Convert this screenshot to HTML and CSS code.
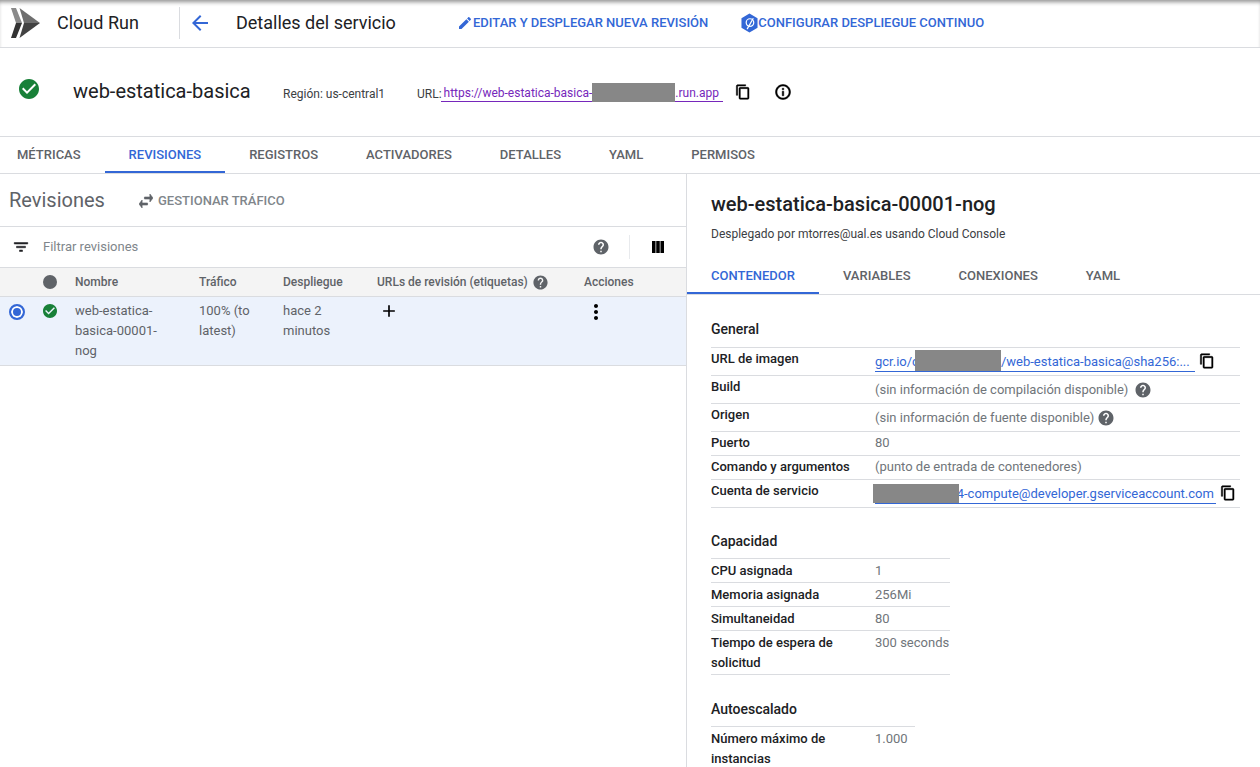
FILE: index.html
```html
<!DOCTYPE html>
<html lang="es">
<head>
    <meta charset="UTF-8">
    <title>Cloud Run - Detalles del servicio</title>
    <link rel="stylesheet" href="styles.css">
</head>
<body>
    <svg class="sprite" xmlns="http://www.w3.org/2000/svg">
        <symbol id="i-check" viewBox="2 2 20 20"><path d="M12 2C6.48 2 2 6.48 2 12s4.48 10 10 10 10-4.48 10-10S17.52 2 12 2zm-2 15l-5-5 1.41-1.41L10 14.17l7.59-7.59L19 8l-9 9z"/></symbol>
        <symbol id="i-back" viewBox="0 0 24 24"><path d="M20 11H7.83l5.59-5.59L12 4l-8 8 8 8 1.41-1.41L7.83 13H20v-2z"/></symbol>
        <symbol id="i-edit" viewBox="0 0 24 24"><path d="M3 17.25V21h3.75L17.81 9.94l-3.75-3.75L3 17.25zM20.71 7.04c.39-.39.39-1.02 0-1.41l-2.34-2.34c-.39-.39-1.02-.39-1.41 0l-1.83 1.83 3.75 3.75 1.83-1.83z"/></symbol>
        <symbol id="i-copy" viewBox="0 0 24 24"><path d="M16 1H4c-1.1 0-2 .9-2 2v14h2V3h12V1zm3 4H8c-1.1 0-2 .9-2 2v14c0 1.1.9 2 2 2h11c1.1 0 2-.9 2-2V7c0-1.1-.9-2-2-2zm0 16H8V7h11v14z"/></symbol>
        <symbol id="i-info" viewBox="0 0 24 24"><path d="M11 7h2v2h-2zm0 4h2v6h-2zm1-9C6.48 2 2 6.48 2 12s4.48 10 10 10 10-4.48 10-10S17.52 2 12 2zm0 18c-4.41 0-8-3.59-8-8s3.59-8 8-8 8 3.59 8 8-3.59 8-8 8z"/></symbol>
        <symbol id="i-help" viewBox="0 0 24 24"><path d="M12 2C6.48 2 2 6.48 2 12s4.48 10 10 10 10-4.48 10-10S17.52 2 12 2zm1 17h-2v-2h2v2zm2.07-7.75l-.9.92C13.45 12.9 13 13.5 13 15h-2v-.5c0-1.1.45-2.1 1.17-2.83l1.24-1.26c.37-.36.59-.86.59-1.41 0-1.1-.9-2-2-2s-2 .9-2 2H8c0-2.21 1.79-4 4-4s4 1.79 4 4c0 .88-.36 1.68-.93 2.25z"/></symbol>
        <symbol id="i-filter" viewBox="0 0 24 24"><path d="M10 18h4v-2h-4v2zM3 6v2h18V6H3zm3 7h12v-2H6v2z"/></symbol>
        <symbol id="i-columns" viewBox="4 5 17 13" preserveAspectRatio="none"><path d="M10 18h5V5h-5v13zm-6 0h5V5H4v13zM16 5v13h5V5h-5z"/></symbol>
        <symbol id="i-swap" viewBox="3 5 18 14" preserveAspectRatio="none"><path d="M6.99 11L3 15l3.99 4v-3H14v-2H6.99v-3zM21 9l-3.99-4v3H10v2h7.01v3L21 9z"/></symbol>
        <symbol id="i-add" viewBox="0 0 24 24"><path d="M19 13h-6v6h-2v-6H5v-2h6V5h2v6h6v2z"/></symbol>
        <symbol id="i-more" viewBox="0 0 24 24"><path d="M12 8c1.1 0 2-.9 2-2s-.9-2-2-2-2 .9-2 2 .9 2 2 2zm0 2c-1.1 0-2 .9-2 2s.9 2 2 2 2-.9 2-2-.9-2-2-2zm0 6c-1.1 0-2 .9-2 2s.9 2 2 2 2-.9 2-2-.9-2-2-2z"/></symbol>
    </svg>

    <header class="topbar">
        <svg class="logo" viewBox="0 0 30 30">
            <path class="logo-a" d="M0 0h5l6 15H5z"/>
            <path class="logo-b" d="M5 15h6L5 30H0z"/>
            <path class="logo-c" d="M8.500 0L29 15H13z"/>
            <path class="logo-d" d="M13 15h16L8.500 30z"/>
        </svg>
        <span class="product">Cloud Run</span>
        <span class="topbar-sep"></span>
        <svg class="icon back-icon"><use href="#i-back"/></svg>
        <h1 class="page-title">Detalles del servicio</h1>
        <a class="action action-edit"><svg class="icon"><use href="#i-edit"/></svg>Editar y desplegar nueva revisión</a>
        <a class="action action-deploy">
            <svg class="icon" viewBox="0 0 18 20">
                <path d="M9 0l8.500 5v10L9 20 .5 15V5z"/>
                <circle class="hex-mark" cx="9.500" cy="9.500" r="4"/>
                <path class="hex-mark" d="M6.500 16.500L13 5"/>
            </svg>Configurar despliegue continuo
        </a>
    </header>

    <section class="service">
        <svg class="icon status-big"><use href="#i-check"/></svg>
        <h2 class="service-name">web-estatica-basica</h2>
        <span class="meta region">Región: us-central1</span>
        <span class="meta">URL:</span>
        <a class="url-link">https://web-estatica-basica-<span class="redact redact-url"></span>.run.app</a>
        <svg class="icon bold copy-icon"><use href="#i-copy"/></svg>
        <svg class="icon bold info-icon"><use href="#i-info"/></svg>
    </section>

    <nav class="tabs tabs-main">
        <a class="tab">Métricas</a>
        <a class="tab active">Revisiones</a>
        <a class="tab">Registros</a>
        <a class="tab">Activadores</a>
        <a class="tab">Detalles</a>
        <a class="tab">YAML</a>
        <a class="tab">Permisos</a>
    </nav>

    <main class="split">
        <section class="left">
            <div class="left-head">
                <h2 class="left-title">Revisiones</h2>
                <a class="traffic"><svg class="icon bold"><use href="#i-swap"/></svg>Gestionar tráfico</a>
            </div>
            <div class="filter-row">
                <svg class="icon bold filter-icon"><use href="#i-filter"/></svg>
                <span class="filter-text">Filtrar revisiones</span>
                <svg class="icon help-icon filter-help"><use href="#i-help"/></svg>
                <span class="filter-sep"></span>
                <svg class="icon columns-icon"><use href="#i-columns"/></svg>
            </div>
            <div class="grid-row grid-head">
                <span></span>
                <span class="dot"></span>
                <span>Nombre</span>
                <span>Tráfico</span>
                <span>Despliegue</span>
                <span class="with-help">URLs de revisión (etiquetas)<svg class="icon help-icon"><use href="#i-help"/></svg></span>
                <span>Acciones</span>
            </div>
            <div class="grid-row grid-body">
                <span class="radio"></span>
                <svg class="icon status-small"><use href="#i-check"/></svg>
                <span>web-estatica-basica-00001-nog</span>
                <span>100% (to latest)</span>
                <span>hace 2 minutos</span>
                <svg class="icon add-icon"><use href="#i-add"/></svg>
                <svg class="icon more-icon"><use href="#i-more"/></svg>
            </div>
        </section>

        <section class="right">
            <h2 class="rev-title">web-estatica-basica-00001-nog</h2>
            <p class="rev-sub">Desplegado por mtorres@ual.es usando Cloud Console</p>
            <nav class="tabs tabs-rev">
                <a class="tab active">Contenedor</a>
                <a class="tab">Variables</a>
                <a class="tab">Conexiones</a>
                <a class="tab">YAML</a>
            </nav>

            <h3 class="group-title group-first">General</h3>
            <div class="kv kv-wide">
                <div class="kv-row tall">
                    <span class="kv-label">URL de imagen</span>
                    <span class="kv-value with-link"><a class="img-link link-img">gcr.io/c<span class="redact redact-img"></span>/web-estatica-basica@sha256:...</a><svg class="icon bold copy-small"><use href="#i-copy"/></svg></span>
                </div>
                <div class="kv-row tall">
                    <span class="kv-label">Build</span>
                    <span class="kv-value">(sin información de compilación disponible)<svg class="icon help-icon build-help"><use href="#i-help"/></svg></span>
                </div>
                <div class="kv-row tall">
                    <span class="kv-label">Origen</span>
                    <span class="kv-value">(sin información de fuente disponible)<svg class="icon help-icon origin-help"><use href="#i-help"/></svg></span>
                </div>
                <div class="kv-row">
                    <span class="kv-label">Puerto</span>
                    <span class="kv-value">80</span>
                </div>
                <div class="kv-row">
                    <span class="kv-label">Comando y argumentos</span>
                    <span class="kv-value">(punto de entrada de contenedores)</span>
                </div>
                <div class="kv-row tall">
                    <span class="kv-label">Cuenta de servicio</span>
                    <span class="kv-value with-link"><a class="img-link"><span class="redact redact-acct"></span>4-compute@developer.gserviceaccount.com</a><svg class="icon bold copy-small"><use href="#i-copy"/></svg></span>
                </div>
            </div>

            <h3 class="group-title">Capacidad</h3>
            <div class="kv kv-cap">
                <div class="kv-row"><span class="kv-label">CPU asignada</span><span class="kv-value">1</span></div>
                <div class="kv-row"><span class="kv-label">Memoria asignada</span><span class="kv-value">256Mi</span></div>
                <div class="kv-row"><span class="kv-label">Simultaneidad</span><span class="kv-value">80</span></div>
                <div class="kv-row"><span class="kv-label">Tiempo de espera de solicitud</span><span class="kv-value">300 seconds</span></div>
            </div>

            <h3 class="group-title group-auto">Autoescalado</h3>
            <div class="kv kv-auto">
                <div class="kv-row"><span class="kv-label">Número máximo de instancias</span><span class="kv-value">1.000</span></div>
            </div>
        </section>
    </main>
</body>
</html>
```

FILE: styles.css
```css
html, body {
    margin: 0;
    padding: 0;
    height: 100%;
    overflow: hidden;
}
body {
    font-family: Roboto, Arial, sans-serif;
    font-size: 13px;
    color: #202124;
    background: #fff;
    display: flex;
    flex-direction: column;
}
h1, h2, h3, p {
    margin: 0;
    font-weight: 400;
}
.sprite {
    display: none;
}
.icon {
    width: 24px;
    height: 24px;
    fill: currentColor;
    flex: none;
}
/* the reference icons are a bit heavier than the plain material paths */
.bold {
    stroke: currentColor;
    stroke-width: 0.7;
}

/* top bar */
.topbar {
    height: 45px;
    flex: none;
    display: flex;
    align-items: center;
    border-bottom: 1px solid #dadce0;
    padding: 0 0 2px 11px;
    box-shadow: inset 0 4px 4px -2px #909090;
}
.logo {
    width: 30px;
    height: 30px;
}
.logo-a {
    fill: #8a8a8a;
}
.logo-b {
    fill: #333;
}
.logo-c {
    fill: #6e6e6e;
}
.logo-d {
    fill: #424242;
}
.product {
    font-size: 18px;
    margin-left: 16px;
    width: 122px;
}
.topbar-sep {
    width: 1px;
    height: 32px;
    background: #dadce0;
}
.back-icon {
    color: #3367d6;
    margin-left: 8px;
}
.page-title {
    font-size: 18px;
    margin-left: 24px;
    width: 221px;
}
.action {
    display: flex;
    align-items: center;
    font-weight: 500;
    font-size: 13px;
    color: #3367d6;
    text-transform: uppercase;
}
.action .icon {
    width: 16px;
    height: 16px;
}
.action-deploy {
    margin-left: 33px;
}
.action-deploy .icon {
    width: 17px;
    height: 20px;
}
.hex-mark {
    fill: none;
    stroke: #fff;
    stroke-width: 1.300;
}

/* service header */
.service {
    height: 86px;
    flex: none;
    display: flex;
    align-items: center;
    border-bottom: 1px solid #dadce0;
    padding: 0 0 2px 19px;
}
.status-big {
    width: 20px;
    height: 20px;
    color: #188038;
    margin-top: -4px;
}
.service-name {
    font-size: 20px;
    margin-left: 34px;
    width: 210px;
}
.meta {
    font-size: 12px;
    color: #3c4043;
    margin-top: 5px;
}
.region {
    width: 134px;
}
.url-link {
    font-size: 12px;
    color: #7627bb;
    border-bottom: 1px solid #7627bb;
    padding: 0 4px 0 3px;
    margin: 5px 0 0 -1px;
    height: 16px;
    line-height: 17px;
}
.redact {
    display: inline-block;
    background: #878787;
    vertical-align: middle;
    position: relative;
}
.redact-url {
    width: 83px;
    height: 19px;
    margin: -3px 0 0;
}
.copy-icon {
    width: 16px;
    height: 16px;
    color: #000;
    margin: 2px 0 0 12px;
}
.info-icon {
    width: 18px;
    height: 18px;
    color: #000;
    margin: 2px 0 0 23px;
}

/* tabs */
.tabs {
    display: flex;
    border-bottom: 1px solid #dadce0;
    flex: none;
}
.tab {
    padding: 0 24px;
    font-weight: 500;
    font-size: 13px;
    text-transform: uppercase;
    color: #5f6368;
    line-height: 36px;
    height: 36px;
    box-sizing: border-box;
    border-bottom: 2px solid transparent;
}
.tab.active {
    color: #3367d6;
    border-bottom-color: #3367d6;
}
.tabs-main .tab:first-child {
    padding-left: 17px;
}

/* left and right parts */
.split {
    flex: 1;
    display: flex;
    min-height: 0;
}
.left {
    width: 686px;
    flex: none;
    border-right: 1px solid #dadce0;
}
.left-head {
    height: 52px;
    display: flex;
    align-items: center;
    padding-left: 9px;
    border-bottom: 1px solid #dadce0;
}
.left-title {
    font-size: 20px;
    color: #5f6368;
    width: 130px;
}
.traffic {
    display: flex;
    align-items: center;
    font-weight: 500;
    font-size: 13px;
    color: #80868b;
    text-transform: uppercase;
    padding-top: 1px;
}
.traffic .icon {
    width: 14px;
    height: 14px;
    margin-right: 5px;
    color: #5f6368;
}
.filter-row {
    height: 40px;
    display: flex;
    align-items: center;
    padding-left: 12px;
    border-bottom: 1px solid #dadce0;
}
.filter-icon {
    width: 18px;
    height: 18px;
    color: #202124;
}
.filter-text {
    color: #80868b;
    margin: -1px 0 0 13px;
    flex: 1;
}
.help-icon {
    width: 17px;
    height: 17px;
    color: #5f6368;
}
.filter-help {
    width: 18px;
    height: 18px;
}
.filter-sep {
    width: 1px;
    height: 24px;
    background: #e8eaed;
    margin: 0 22px 0 19px;
}
.columns-icon {
    width: 12px;
    height: 12px;
    color: #000;
    margin-right: 22px;
}
.grid-row {
    display: grid;
    grid-template-columns: 34px 41px 124px 84px 94px 207px 1fr;
}
.grid-head {
    height: 28px;
    align-items: center;
    background: #f4f4f4;
    border-bottom: 1px solid #dadce0;
    font-size: 12px;
    font-weight: 500;
    color: #5f6368;
}
.dot {
    width: 14px;
    height: 14px;
    border-radius: 50%;
    background: #5f6368;
    margin-left: 9px;
}
.with-help {
    display: flex;
    align-items: center;
    gap: 4px;
}
.grid-body {
    height: 69px;
    background: #ecf2fc;
    border-bottom: 1px solid #dadce0;
    box-sizing: border-box;
    padding-top: 4px;
    line-height: 20px;
    color: #5f6368;
}
.grid-body > span:nth-child(n+3) {
    padding-right: 24px;
}
.radio {
    width: 12px;
    height: 12px;
    border: 2px solid #3367d6;
    box-shadow: inset 0 0 0 2px #fff;
    background: #3367d6;
    border-radius: 50%;
    margin: 3px 0 0 9px;
}
.status-small {
    width: 14px;
    height: 14px;
    color: #188038;
    margin: 3px 0 0 9px;
}
.add-icon {
    width: 20px;
    height: 20px;
    color: #000;
    margin: 0 0 0 2px;
}
.more-icon {
    width: 24px;
    height: 24px;
    color: #000;
    margin: -1px 0 0;
}

/* right part */
.right {
    flex: 1;
    padding-right: 20px;
    min-width: 0;
}
.rev-title {
    font-size: 20px;
    font-weight: 500;
    margin: 18px 0 0 24px;
    line-height: 24px;
}
.rev-sub {
    font-size: 12px;
    color: #3c4043;
    margin: 9px 0 0 24px;
    line-height: 18px;
}
.tabs-rev {
    margin: 15px -20px 0 0;
}
.group-title {
    font-size: 14px;
    font-weight: 500;
    line-height: 20px;
    margin: 23px 0 7px 24px;
}
.group-first {
    margin: 24px 0 8px 24px;
}
.group-auto {
    margin-top: 24px;
}
.kv {
    margin-left: 24px;
    border-top: 1px solid #dadce0;
}
.kv-cap {
    width: 239px;
}
.kv-auto {
    width: 204px;
}
.kv-row {
    display: grid;
    grid-template-columns: 164px 1fr;
    line-height: 20px;
    padding: 1px 0 2px;
    border-bottom: 1px solid #dadce0;
}
.kv-cap .kv-row, .kv-auto .kv-row {
    padding: 2px 0 1px;
}
.kv-auto .kv-row {
    border-bottom: 0;
}
.kv-row.tall {
    height: 28px;
    box-sizing: border-box;
}
.kv-label {
    font-weight: 500;
    font-size: 13px;
    color: #202124;
}
.kv-value {
    color: #70757a;
    display: flex;
    align-items: flex-start;
}
.tall .kv-value {
    padding-top: 3px;
}
.tall .with-link {
    padding-top: 4px;
}
.img-link {
    color: #3367d6;
    border-bottom: 1px solid #3367d6;
    height: 18px;
    line-height: 18px;
    white-space: nowrap;
    padding-right: 2px;
}
.link-img {
    padding-right: 5px;
}
.redact-img {
    width: 86px;
    height: 21px;
    margin: -5px 0 0 -4px;
}
.redact-acct {
    width: 86px;
    height: 19px;
    margin: -3px -2.300px 0 -2px;
    z-index: 1;
}
.copy-small {
    width: 16px;
    height: 16px;
    color: #000;
    margin-left: 4px;
}
.build-help {
    margin: 1px 0 0 6px;
    width: 18px;
    height: 18px;
}
.origin-help {
    margin: 1px 0 0 3px;
    width: 18px;
    height: 18px;
}
```
